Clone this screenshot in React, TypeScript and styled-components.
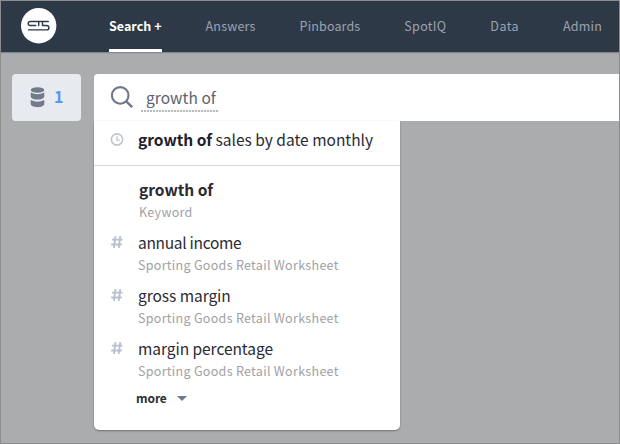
import React from "react";
import styled, { createGlobalStyle } from "styled-components";

const Global = createGlobalStyle`
  * { box-sizing: border-box; }
  body { margin: 0; overflow: hidden; font-family: "Noto Sans CJK SC", "Noto Sans", sans-serif; }
`;

const Frame = styled.div`
  width: 620px;
  height: 444px;
  border: 1px solid #8c8c8d;
  background: #abacae;
  overflow: hidden;
`;

const Header = styled.header`
  height: 51px;
  display: flex;
  align-items: flex-start;
  padding-left: 20px;
  background: #2e3948;
  box-shadow: 0 1px 1px rgba(60, 65, 75, 0.35);
`;

const Logo = styled.svg`
  width: 36px;
  height: 36px;
  margin-top: 7px;
  flex: none;
`;

const Nav = styled.nav`
  display: flex;
  gap: 44px;
  margin-left: 52px;
`;

const NavItem = styled.a<{ $active?: boolean; $spacing?: number }>`
  height: 51px;
  line-height: 49px;
  white-space: nowrap;
  font-size: 12.5px;
  font-weight: ${(p) => (p.$active ? 700 : 400)};
  letter-spacing: ${(p) => p.$spacing ?? 0}px;
  color: ${(p) => (p.$active ? "#ffffff" : "#9ba3b0")};
  box-shadow: ${(p) => (p.$active ? "inset 0 -3px 0 #ffffff" : "none")};
`;

const Workspace = styled.main`
  display: flex;
  align-items: flex-start;
  padding: 22px 0 0 11px;
`;

const SourceButton = styled.button`
  width: 69px;
  height: 47px;
  padding: 0 0 0 18px;
  border: 0;
  border-radius: 4px;
  background: #e7ebf0;
  display: flex;
  align-items: center;
  gap: 9px;
  flex: none;
`;

const SourceCount = styled.span`
  font: 700 16px/20px "Noto Sans CJK SC", sans-serif;
  color: #5a95f5;
  padding-bottom: 4px;
`;

const SearchArea = styled.section`
  flex: 1;
  margin-left: 13px;
`;

const SearchBar = styled.div`
  height: 47px;
  display: flex;
  align-items: flex-start;
  padding: 11px 0 0 16px;
  background: #ffffff;
  border-radius: 4px 0 0 0;
`;

const Query = styled.span`
  width: 78px;
  height: 27px;
  margin-left: 7px;
  padding-left: 5px;
  line-height: 25px;
  font-size: 15.5px;
  letter-spacing: 0.05px;
  color: #5c6270;
  white-space: nowrap;
  background: repeating-linear-gradient(90deg, #b9babd 0 2px, #f8f8f8 2px 3px) left bottom / 100% 2px no-repeat;
`;

const Dropdown = styled.div`
  width: 306px;
  height: 309px;
  background: #ffffff;
  border-radius: 0 0 5px 5px;
  box-shadow: 0 1px 2px rgba(40, 44, 52, 0.45);
`;

const Recent = styled.div`
  height: 45px;
  display: flex;
  align-items: flex-start;
  padding: 5px 0 0 16px;
  border-bottom: 1px solid #d6d8dc;
`;

const Suggestions = styled.div`
  padding: 10px 0 0 16px;
`;

const Suggestion = styled.div`
  height: 53px;
  display: flex;
`;

const IconSlot = styled.span<{ $wide?: boolean }>`
  width: ${(p) => (p.$wide ? 29 : 28)}px;
  flex: none;
  display: flex;
  padding-top: 6px;
`;

const Title = styled.div<{ $spacing?: number; $bold?: boolean }>`
  font-size: 15.5px;
  line-height: 26px;
  letter-spacing: ${(p) => p.$spacing ?? 0}px;
  font-weight: ${(p) => (p.$bold ? 700 : 400)};
  color: #292a34;
  white-space: nowrap;
`;

const Match = styled.b`
  color: #20212c;
  font-weight: 700;
`;

const Subtitle = styled.div`
  font-size: 12.5px;
  line-height: 20px;
  letter-spacing: 0.3px;
  color: #a0a1a4;
  white-space: nowrap;
`;

const More = styled.button`
  display: flex;
  align-items: center;
  gap: 10px;
  height: 20px;
  margin: 0 0 0 26px;
  padding: 0;
  border: 0;
  background: none;
  font: 700 12px/20px "Noto Sans CJK SC", sans-serif;
  letter-spacing: -0.1px;
  color: #2b2c34;
`;

const LogoMark = () => (
  <Logo viewBox="0 0 36 36" fill="none" stroke="#2e3948" strokeWidth="1.4" strokeLinecap="round">
    <circle cx="17.7" cy="17.7" r="17.7" fill="#fff" stroke="none" />
    <path d="M27.3 13.5H9.2a2 2 0 0 0 0 4h5.6M17.7 13.5v4M21.5 13.5v4h4.2a2.2 2.2 0 0 1 0 4.4H7.5" />
  </Logo>
);

const DatabaseIcon = () => (
  <svg width="15" height="21" viewBox="0 0 15 21" fill="#727b8a">
    <ellipse cx="7.5" cy="3" rx="6.8" ry="2.8" />
    <path d="M.7 5.5Q7.5 9 14.3 5.5V9.2C14.3 13.7.7 13.7.7 9.2Z" />
    <path d="M.7 13Q7.5 16.5 14.3 13V16.8C14.3 21.3.7 21.3.7 16.8Z" />
  </svg>
);

const SearchIcon = () => (
  <svg width="24" height="24" viewBox="0 0 24 24" fill="none" stroke="#6f7989" strokeWidth="2.1">
    <circle cx="10.2" cy="10.4" r="8.3" />
    <path d="m16.2 16.4 6 5.8" strokeWidth="2.5" />
  </svg>
);

const ClockIcon = () => (
  <svg width="14" height="14" viewBox="0 0 14 14" fill="none" stroke="#bcc4d1" strokeWidth="1.6">
    <circle cx="7" cy="7.5" r="5.6" />
    <path d="M7 4.2v4h2.7" strokeWidth="1.3" />
  </svg>
);

const HashIcon = () => (
  <svg width="14" height="14" viewBox="0 0 14 14" fill="none" stroke="#b9c1ce" strokeWidth="1.9">
    <path d="M5.5 1.2 3.9 12.8M10.3 1.2 8.7 12.8M2 4.6h10.6M1.2 9.5h10.6" />
  </svg>
);

const columns = [
  { name: "annual income", spacing: -0.3 },
  { name: "gross margin", spacing: -0.05 },
  { name: "margin percentage", spacing: -0.05 },
];

export default function App() {
  return (
    <>
      <Global />
      <Frame>
        <Header>
          <LogoMark />
          <Nav>
            <NavItem $active $spacing={0.02}>Search +</NavItem>
            <NavItem $spacing={0.2}>Answers</NavItem>
            <NavItem $spacing={0.15}>Pinboards</NavItem>
            <NavItem $spacing={0.3}>SpotIQ</NavItem>
            <NavItem $spacing={0.45}>Data</NavItem>
            <NavItem $spacing={0.2}>Admin</NavItem>
          </Nav>
        </Header>
        <Workspace>
          <SourceButton>
            <DatabaseIcon />
            <SourceCount>1</SourceCount>
          </SourceButton>
          <SearchArea>
            <SearchBar>
              <SearchIcon />
              <Query>growth of</Query>
            </SearchBar>
            <Dropdown>
              <Recent>
                <IconSlot><ClockIcon /></IconSlot>
                <Title><Match>growth of</Match> sales by date monthly</Title>
              </Recent>
              <Suggestions>
                <Suggestion>
                  <IconSlot $wide />
                  <div>
                    <Title $bold>growth of</Title>
                    <Subtitle>Keyword</Subtitle>
                  </div>
                </Suggestion>
                {columns.map((c) => (
                  <Suggestion key={c.name}>
                    <IconSlot><HashIcon /></IconSlot>
                    <div>
                      <Title $spacing={c.spacing}>{c.name}</Title>
                      <Subtitle>Sporting Goods Retail Worksheet</Subtitle>
                    </div>
                  </Suggestion>
                ))}
                <More>
                  more
                  <svg width="10" height="5" viewBox="0 0 10 5" fill="#727b8a"><path d="M0 0h10L5 5z" /></svg>
                </More>
              </Suggestions>
            </Dropdown>
          </SearchArea>
        </Workspace>
      </Frame>
    </>
  );
}
